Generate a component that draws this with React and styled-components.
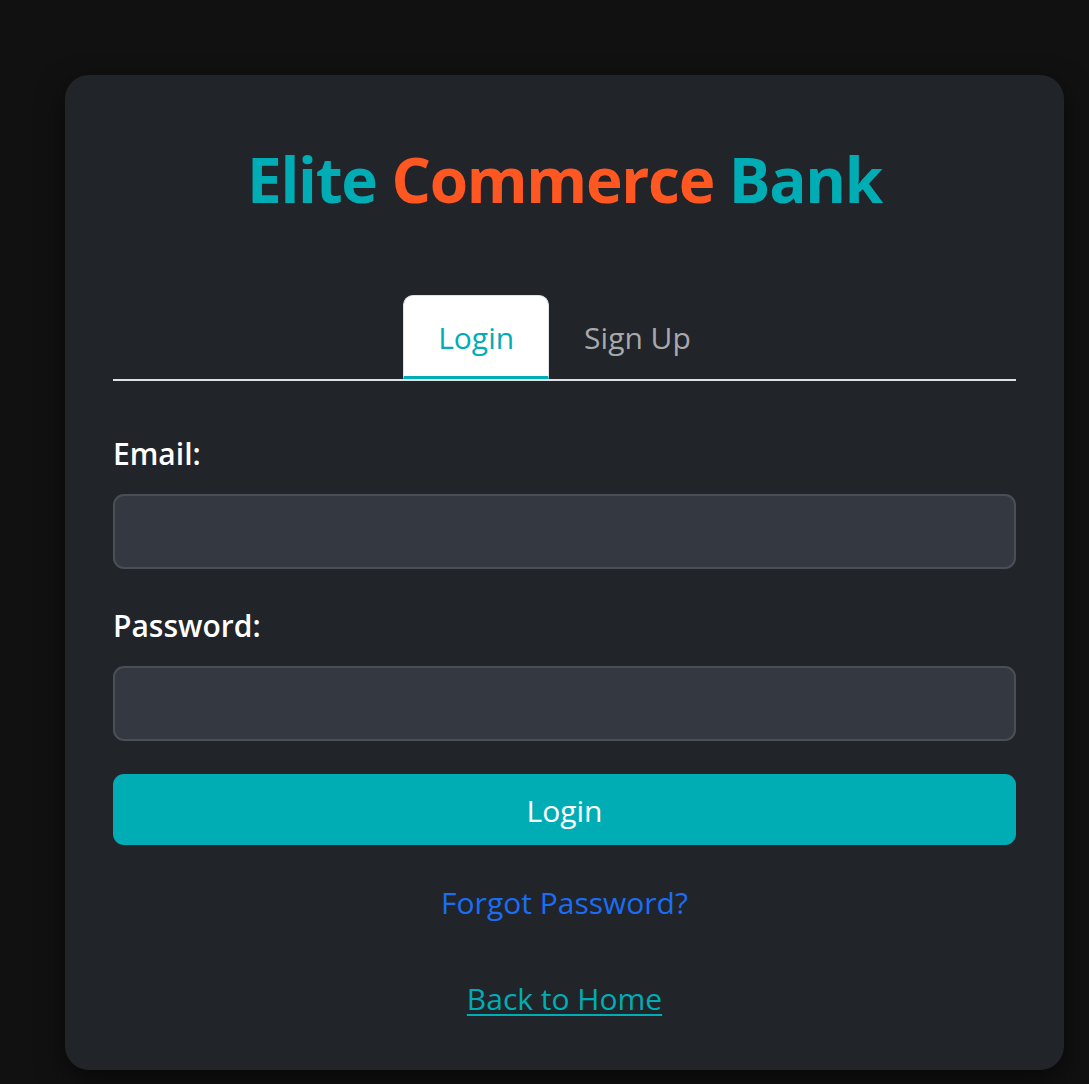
import React from 'react'
import styled, { createGlobalStyle } from 'styled-components'

const GlobalStyle = createGlobalStyle`
	html, body {
		margin: 0;
		padding: 0;
		background: #111111;
	}
	body {
		font-family: "Open Sans", "Noto Sans", sans-serif;
	}
`

const Page = styled.div`
	min-height: 1084px;
	box-sizing: border-box;
	padding: 75px 25px 16px 65px;
`

const Card = styled.div`
	width: 999px;
	box-sizing: border-box;
	padding: 48px 48px 53px;
	background: #212429;
	border-radius: 24px;
	box-shadow: 0 10px 28px rgba(0, 0, 0, 0.55);
	display: flex;
	flex-direction: column;
`

const Title = styled.h1`
	margin: 16px 0 0;
	height: 80px;
	line-height: 80px;
	text-align: center;
	font-size: 62px;
	font-weight: 700;
	letter-spacing: -1.3px;
	color: #00adb5;
	white-space: nowrap;
`

const Accent = styled.span`
	color: #ff5722;
`

const Tabs = styled.div`
	margin-top: 76px;
	display: flex;
	justify-content: center;
	border-bottom: 2px solid #dee2e6;
`

const Tab = styled.div`
	height: 84px;
	box-sizing: border-box;
	padding: 2px 34px 0;
	display: flex;
	align-items: center;
	font-size: 30px;
	border: 1px solid ${p => (p.$active ? '#dee2e6' : 'transparent')};
	border-bottom: 3px solid ${p => (p.$active ? '#00adb5' : 'transparent')};
	border-radius: 10px 10px 0 0;
	background: ${p => (p.$active ? '#ffffff' : 'transparent')};
	color: ${p => (p.$active ? '#00adb5' : '#a7a9ab')};
	cursor: pointer;
`

const Form = styled.form`
	display: flex;
	flex-direction: column;
`

const Label = styled.label`
	height: 36px;
	line-height: 36px;
	font-size: 30px;
	font-weight: 600;
	color: #ffffff;
	margin-top: ${p => p.$top}px;
`

const Input = styled.input`
	margin-top: 22px;
	height: 75px;
	box-sizing: border-box;
	width: 100%;
	background: #343840;
	border: 2px solid #4a4f57;
	border-radius: 11px;
	color: #ffffff;
	font: 400 28px "Open Sans", sans-serif;
	padding: 0 18px;
	outline: none;
`

const Button = styled.button`
	margin-top: 33px;
	height: 71px;
	padding-top: 2px;
	border: none;
	border-radius: 11px;
	background: #00adb5;
	color: #ffffff;
	font: 400 30px "Open Sans", sans-serif;
	cursor: pointer;
`

const LinkRow = styled.div`
	margin-top: ${p => p.$top}px;
	height: 36px;
	line-height: 36px;
	text-align: center;
	font-size: 30px;
`

const ForgotLink = styled.a`
	color: #1a6ef5;
	text-decoration: none;
	cursor: pointer;
`

const HomeLink = styled.a`
	color: #00adb5;
	text-decoration: underline;
	text-decoration-thickness: 2px;
	text-underline-offset: 4px;
	cursor: pointer;
`

export default function App() {
	return (
		<Page>
			<GlobalStyle />
			<Card>
				<Title>
					Elite <Accent>Commerce</Accent> Bank
				</Title>
				<Tabs>
					<Tab $active>Login</Tab>
					<Tab>Sign Up</Tab>
				</Tabs>
				<Form onSubmit={ev => ev.preventDefault()}>
					<Label $top={55} htmlFor='email'>Email:</Label>
					<Input id='email' type='email' />
					<Label $top={39} htmlFor='password'>Password:</Label>
					<Input id='password' type='password' />
					<Button type='submit'>Login</Button>
				</Form>
				<LinkRow $top={40}>
					<ForgotLink>Forgot Password?</ForgotLink>
				</LinkRow>
				<LinkRow $top={60}>
					<HomeLink>Back to Home</HomeLink>
				</LinkRow>
			</Card>
		</Page>
	)
}
